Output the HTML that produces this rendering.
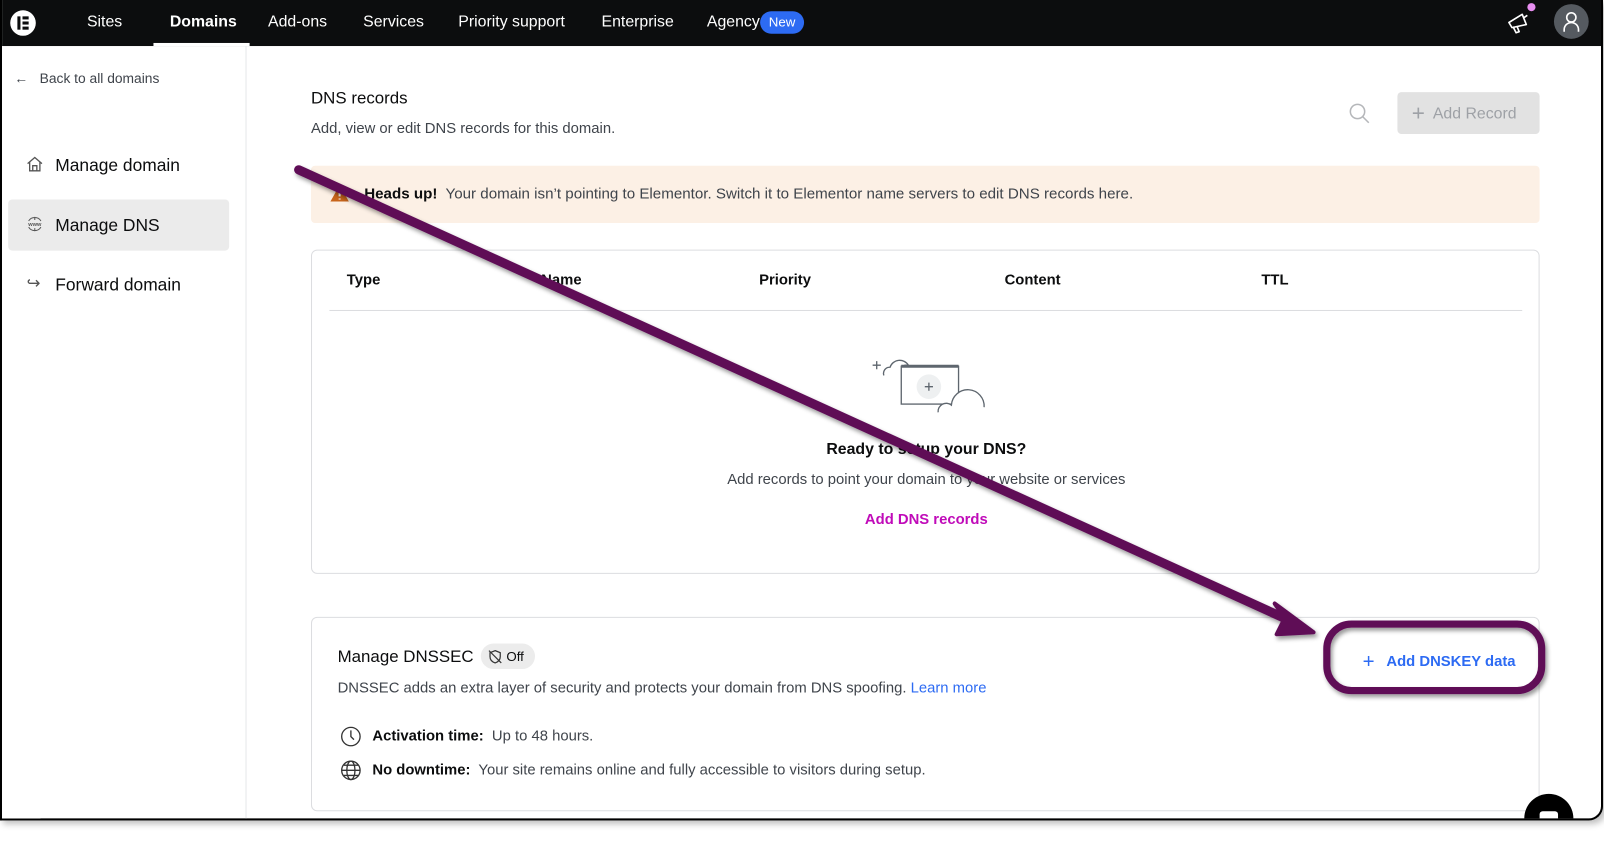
<!DOCTYPE html>
<html><head><meta charset="utf-8"><style>
*{box-sizing:border-box;margin:0;padding:0}
body{width:1604px;height:822px;background:#fff;font-family:"Liberation Sans",Arial,sans-serif;position:relative;overflow:hidden;color:#0c0d0e}
#wrap{position:absolute;left:0;top:0;width:1568px;height:804px;transform:scale(1.023);transform-origin:0 0}
.frame{position:absolute;left:0;top:0;width:1567px;height:802px;border:2px solid #000;border-top:none;border-radius:0 0 14px 0;overflow:hidden;background:#fff;box-shadow:3px 3px 6px rgba(0,0,0,.25)}
.nav{position:absolute;left:0;top:0;width:1600px;height:45px;background:#0c0d0e;color:#fff;font-size:15.5px}
.nav span{position:absolute;top:13px}
.side{position:absolute;left:0;top:45px;width:239px;height:760px;border-right:1px solid #e6e8ea}
.abs{position:absolute}
.t{font-size:17px;color:#0c0d0e}
.card{position:absolute;border:1px solid #dcdde0;border-radius:6px;background:#fff}
</style></head><body>
<div id="wrap">
<div class="frame">
<div class="nav">
  <div class="abs" style="left:8px;top:10px;width:25px;height:25px;border-radius:50%;background:#fff"></div>
  <div class="abs" style="left:15px;top:16px;width:3px;height:13px;background:#0c0d0e"></div>
  <div class="abs" style="left:20px;top:16px;width:6px;height:3px;background:#0c0d0e"></div>
  <div class="abs" style="left:20px;top:21px;width:6px;height:3px;background:#0c0d0e"></div>
  <div class="abs" style="left:20px;top:26px;width:6px;height:3px;background:#0c0d0e"></div>
  <span style="left:83px">Sites</span>
  <span style="left:164px;font-weight:bold">Domains</span>
  <div class="abs" style="left:148px;top:42px;width:94px;height:3px;background:#fff"></div>
  <span style="left:260px">Add-ons</span>
  <span style="left:353px">Services</span>
  <span style="left:446px">Priority support</span>
  <span style="left:586px">Enterprise</span>
  <span style="left:689px">Agency</span>
  <div class="abs" style="left:741px;top:11px;width:43px;height:22px;border-radius:11px;background:#2d6bf3;font-size:13px;text-align:center;line-height:22px">New</div>
  <svg class="abs" style="left:1468px;top:8px" width="30" height="30" viewBox="0 0 30 30" fill="none" stroke="#fff" stroke-width="1.6" stroke-linejoin="round"><path d="M5 14l13-8 4 10-14 3z M9 18l3 6 3-1-2-5 M20 9l3-2"/></svg>
  <div class="abs" style="left:1491px;top:3px;width:8px;height:8px;border-radius:50%;background:#e88ef0"></div>
  <div class="abs" style="left:1517px;top:4px;width:34px;height:34px;border-radius:50%;background:#555a60"></div>
  <svg class="abs" style="left:1517px;top:4px" width="34" height="34" viewBox="0 0 34 34" fill="none" stroke="#fff" stroke-width="1.6"><circle cx="17" cy="13" r="4.5"/><path d="M10 27v-2a7 7 0 0114 0v2"/></svg>
</div>
<div class="side">
  <div class="abs" style="left:12px;top:24px;font-size:13.5px;color:#3f444b">←&nbsp;&nbsp;&nbsp;Back to all domains</div>
  <svg class="abs" style="left:23px;top:106px" width="18" height="18" viewBox="0 0 18 18" fill="none" stroke="#555" stroke-width="1.3"><path d="M2 9l7-6 7 6M4 7.5V16h10V7.5M7 16v-5h4v5"/></svg>
  <div class="abs t" style="left:52px;top:107px">Manage domain</div>
  <div class="abs" style="left:6px;top:150px;width:216px;height:50px;border-radius:4px;background:#ebebeb"></div>
  <svg class="abs" style="left:23px;top:165px" width="18" height="18" viewBox="0 0 18 18" fill="none" stroke="#555" stroke-width="1"><path d="M3 6a7 7 0 0112 0M3 12a7 7 0 0012 0M9 2v3M9 13v3"/><text x="9" y="11" font-size="5.5" text-anchor="middle" fill="#555" stroke="none" font-weight="bold">www</text></svg>
  <div class="abs t" style="left:52px;top:166px">Manage DNS</div>
  <div class="abs" style="left:24px;top:222px;font-size:16px;color:#555">↪</div>
  <div class="abs t" style="left:52px;top:224px">Forward domain</div>
</div>
<div class="abs" style="left:302px;top:87px;font-size:16.5px">DNS records</div>
<div class="abs" style="left:302px;top:118px;font-size:14.5px;color:#3f444b">Add, view or edit DNS records for this domain.</div>
<svg class="abs" style="left:1315px;top:99px" width="24" height="24" viewBox="0 0 24 24" fill="none" stroke="#b5b7ba" stroke-width="1.5"><circle cx="10" cy="10" r="7"/><path d="M15 15l6 6"/></svg>
<div class="abs" style="left:1364px;top:90px;width:139px;height:41px;border-radius:4px;background:#e2e2e2;color:#9ea1a6;font-size:15.5px;line-height:41px;padding-left:14px"><span style="font-size:22px;vertical-align:-2px;font-weight:300">+</span>&nbsp; Add Record</div>
<div class="abs" style="left:302px;top:162px;width:1201px;height:56px;border-radius:4px;background:#fcf0e5"></div>
<svg class="abs" style="left:320px;top:180px" width="20" height="18" viewBox="0 0 20 18"><path d="M10 1L19 17H1z" fill="#c8651b"/><path d="M10 6v6M10 14v1" stroke="#fff" stroke-width="2"/></svg>
<div class="abs" style="left:354px;top:182px;font-size:14.8px;color:#3f444b"><b style="color:#0c0d0e;font-weight:bold">Heads up!</b>&nbsp; Your domain isn’t pointing to Elementor. Switch it to Elementor name servers to edit DNS records here.</div>
<div class="card" style="left:302px;top:244px;width:1201px;height:317px">
  <div class="abs" style="left:17px;top:58px;width:1166px;height:1px;background:#dcdde0"></div>
  <div class="abs" style="left:34px;top:21px;font-size:14.5px;font-weight:bold">Type</div>
  <div class="abs" style="left:224px;top:21px;font-size:14.5px;font-weight:bold">Name</div>
  <div class="abs" style="left:437px;top:21px;font-size:14.5px;font-weight:bold">Priority</div>
  <div class="abs" style="left:677px;top:21px;font-size:14.5px;font-weight:bold">Content</div>
  <div class="abs" style="left:928px;top:21px;font-size:14.5px;font-weight:bold">TTL</div>
  <svg class="abs" style="left:545px;top:100px" width="120" height="62" viewBox="0 0 120 62" fill="none" stroke="#5e666e" stroke-width="1.3"><path d="M3 12h8M7 8v8"/><path d="M14 22a6 6 0 016-8 10 10 0 0118-2h-4" fill="#fff"/><rect x="31" y="13" width="56" height="37" fill="#fff"/><path d="M31 13h56" stroke-width="3"/><circle cx="58" cy="33" r="12" fill="#eef0f1" stroke="none"/><path d="M58 29v8M54 33h8"/><path d="M67 58a8 8 0 0113-7 10 10 0 0132 2" fill="#fff"/></svg>
  <div class="abs" style="left:0;width:1201px;top:186px;text-align:center;font-size:15.5px;font-weight:bold">Ready to setup your DNS?</div>
  <div class="abs" style="left:0;width:1201px;top:216px;text-align:center;font-size:14.5px;color:#3f444b">Add records to point your domain to your website or services</div>
  <div class="abs" style="left:0;width:1201px;top:255px;text-align:center;font-size:14.5px;color:#c00bb9;font-weight:bold">Add DNS records</div>
</div>
<div class="card" style="left:302px;top:603px;width:1201px;height:190px">
  <div class="abs" style="left:25px;top:29px;font-size:16.5px">Manage DNSSEC</div>
  <div class="abs" style="left:165px;top:25px;width:53px;height:25px;border-radius:13px;background:#ececec;font-size:13px;line-height:25px;padding-left:25px">Off</div>
  <svg class="abs" style="left:171px;top:30px" width="16" height="16" viewBox="0 0 16 16" fill="none" stroke="#333" stroke-width="1.2"><path d="M8 2l5 2v4c0 3-2 5-5 6-3-1-5-3-5-6V4z M2 2l12 12"/></svg>
  <div class="abs" style="left:25px;top:61px;font-size:14.5px;color:#3f444b">DNSSEC adds an extra layer of security and protects your domain from DNS spoofing. <span style="color:#2d6bf3">Learn more</span></div>
  <svg class="abs" style="left:27px;top:105px" width="22" height="22" viewBox="0 0 22 22" fill="none" stroke="#333" stroke-width="1.3"><circle cx="11" cy="11" r="9"/><path d="M11 5v6l3 3"/></svg>
  <div class="abs" style="left:59px;top:108px;font-size:14.5px;color:#3f444b"><b style="color:#0c0d0e">Activation time:</b>&nbsp; Up to 48 hours.</div>
  <svg class="abs" style="left:27px;top:138px" width="22" height="22" viewBox="0 0 22 22" fill="none" stroke="#333" stroke-width="1.3"><circle cx="11" cy="11" r="9"/><ellipse cx="11" cy="11" rx="4" ry="9"/><path d="M2 11h18M4 6h14M4 16h14"/></svg>
  <div class="abs" style="left:59px;top:141px;font-size:14.5px;color:#3f444b"><b style="color:#0c0d0e">No downtime:</b>&nbsp; Your site remains online and fully accessible to visitors during setup.</div>
</div>
<div class="abs" style="left:1330px;top:636px;font-size:14.5px;color:#2d6bf3;font-weight:bold"><span style="font-size:20px;font-weight:300;vertical-align:-2px">+</span>&nbsp;&nbsp; Add DNSKEY data</div>
<div class="abs" style="left:1488px;top:776px;width:48px;height:48px;border-radius:50%;background:#000"></div>
<div class="abs" style="left:1503px;top:793px;width:18px;height:12px;border-radius:3px;background:#fff"></div>
</div>
<svg class="abs" style="left:0;top:0" width="1604" height="822">
<defs><filter id="s" x="-10%" y="-10%" width="130%" height="130%"><feDropShadow dx="2" dy="3" stdDeviation="2" flood-opacity=".4"/></filter></defs>
<g filter="url(#s)">
<path d="M292 166L1255 604" stroke="#5f0a57" stroke-width="9" stroke-linecap="round"/>
<path d="M1284 618L1246 590L1256 604L1248 620Z" fill="#5f0a57" stroke="#5f0a57" stroke-width="4" stroke-linejoin="round"/>
<rect x="1297" y="610" width="210" height="65" rx="24" fill="none" stroke="#5f0a57" stroke-width="7"/>
</g>
</svg>
</div>
</body></html>
